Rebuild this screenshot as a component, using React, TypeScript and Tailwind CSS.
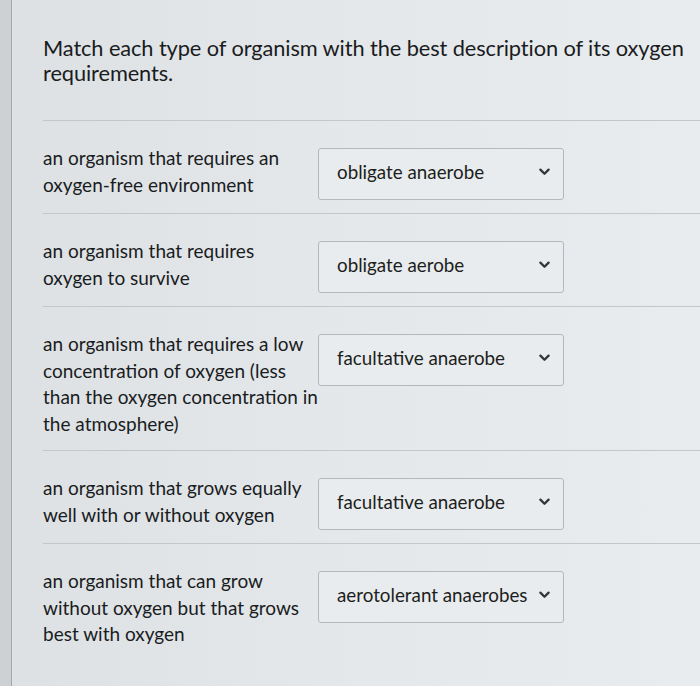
// Questão de associação: tipo de organismo x necessidade de oxigênio.
const linhas = [
  { texto: "an organism that requires an oxygen-free environment", resposta: "obligate anaerobe" },
  { texto: "an organism that requires oxygen to survive", resposta: "obligate aerobe" },
  {
    texto: "an organism that requires a low concentration of oxygen (less than the oxygen concentration in the atmosphere)",
    resposta: "facultative anaerobe",
  },
  { texto: "an organism that grows equally well with or without oxygen", resposta: "facultative anaerobe" },
  {
    texto: "an organism that can grow without oxygen but that grows best with oxygen",
    resposta: "aerotolerant anaerobes",
  },
];

function Chevron() {
  return (
    <svg width="11" height="8" viewBox="0 0 11 8" className="shrink-0">
      <path d="M1.4 1.6 L5.5 5.8 L9.6 1.6" fill="none" stroke="#33363a" strokeWidth="2.3" strokeLinecap="round" strokeLinejoin="round" />
    </svg>
  );
}

function Seletor({ valor }: { valor: string }) {
  return (
    <div className="mt-[3px] flex h-[52px] w-[246px] shrink-0 items-center justify-between rounded-[3px] border border-[#b4b8bc] bg-[#e9ecee] pl-[18px] pr-[13px] pb-[4px] text-[18.8px] text-[#1c1e20]">
      <span>{valor}</span>
      <Chevron />
    </div>
  );
}

export default function App() {
  return (
    <div
      className="flex min-h-[686px] w-[700px] overflow-hidden bg-gradient-to-r from-[#dde1e4] via-[#e4e8eb] to-[#e8ecef] text-[#1a1c1e]"
      style={{ fontFamily: "Lato, 'Open Sans', sans-serif" }}
    >
      <div className="w-[12px] shrink-0 border-r border-[#a3a8ac] bg-[#cdd1d4]" />
      <div className="flex-1 pl-[31px]">
        <div className="pt-[35px] pr-[4px] pb-[35px] text-[21.8px] leading-[25px] tracking-[-0.1px]">
          Match each type of organism with the best description of its oxygen requirements.
        </div>
        {linhas.map((l, i) => (
          <div key={i} className="flex items-start border-t border-[#c3c7cb] pt-[24px] pb-[13px]">
            <div className="w-[275px] shrink-0 text-[19px] leading-[26.5px]">{l.texto}</div>
            <Seletor valor={l.resposta} />
          </div>
        ))}
      </div>
    </div>
  );
}
